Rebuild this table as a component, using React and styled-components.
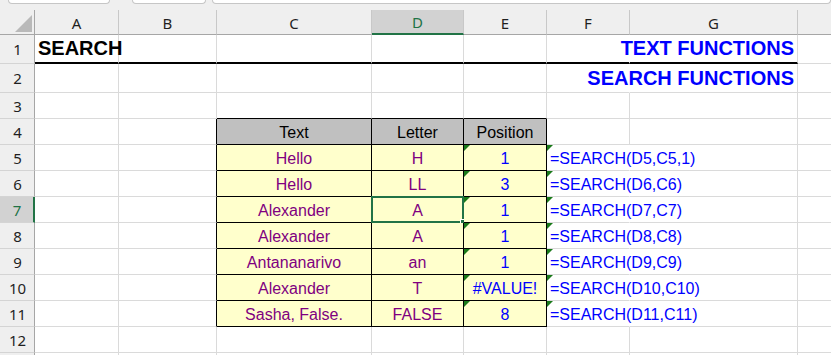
import React from 'react';
import styled, { createGlobalStyle } from 'styled-components';

const GlobalStyle = createGlobalStyle`
    html, body {
        margin: 0;
        padding: 0;
        background: #ffffff;
        overflow: hidden;
    }
`;

const GRID = '#dadada';
const GREEN = '#217346';

const colWidths = [35, 84, 98, 155, 92, 83, 83, 168, 100];
// H runs past the window edge, so its label is not in view
const colNames = ['A', 'B', 'C', 'D', 'E', 'F', 'G', ''];
const rowHeights = [29, 29, 26, 26, 26, 26, 26, 26, 26, 26, 26, 26, 26];

const rows = [
    ['Hello', 'H', '1', '=SEARCH(D5,C5,1)'],
    ['Hello', 'LL', '3', '=SEARCH(D6,C6)'],
    ['Alexander', 'A', '1', '=SEARCH(D7,C7)'],
    ['Alexander', 'A', '1', '=SEARCH(D8,C8)'],
    ['Antananarivo', 'an', '1', '=SEARCH(D9,C9)'],
    ['Alexander', 'T', '#VALUE!', '=SEARCH(D10,C10)'],
    ['Sasha, False.', 'FALSE', '8', '=SEARCH(D11,C11)'],
];

const Window = styled.div`
    width: 831px;
    height: 355px;
    overflow: hidden;
    background: #ffffff;
`;

const TopStrip = styled.div`
    height: 10px;
    background: #efefef;
    display: flex;
    align-items: flex-start;
    overflow: hidden;
`;

const BarBox = styled.div`
    height: 3px;
    background: #ffffff;
    border: 1px solid #c6c6c6;
    border-top: none;
    border-radius: 0 0 4px 4px;
    margin-left: ${p => p.$gap}px;
    width: ${p => (p.$w ? `${p.$w}px` : 'auto')};
    flex: ${p => (p.$w ? '0 0 auto' : '1')};
`;

const Sheet = styled.div`
    display: grid;
    width: ${colWidths.reduce((a, b) => a + b, 0)}px;
    grid-template-columns: ${colWidths.map(w => `${w}px`).join(' ')};
    grid-template-rows: 25px ${rowHeights.map(h => `${h}px`).join(' ')};
`;

const Corner = styled.div`
    box-sizing: border-box;
    background: #efefef;
    border-right: 1px solid #a6a6a6;
    border-bottom: 1px solid #a6a6a6;
    display: flex;
    align-items: flex-end;
    justify-content: flex-end;
    padding: 0 2px 2px 0;
`;

const CornerMark = styled.div`
    width: 0;
    height: 0;
    border-bottom: 17px solid #b9b9b9;
    border-left: 17px solid transparent;
`;

const ColHead = styled.div`
    box-sizing: border-box;
    background: ${p => (p.$active ? '#d2d2d2' : '#efefef')};
    color: ${p => (p.$active ? GREEN : '#1f1f1f')};
    border-right: 1px solid #c8c8c8;
    border-bottom: ${p => (p.$active ? `2px solid ${GREEN}` : '1px solid #a6a6a6')};
    font-family: "Noto Sans", "Open Sans", sans-serif;
    font-size: 15px;
    display: flex;
    align-items: center;
    justify-content: center;
    padding-top: 1px;
`;

const RowHead = styled.div`
    box-sizing: border-box;
    background: ${p => (p.$active ? '#d2d2d2' : '#efefef')};
    color: ${p => (p.$active ? GREEN : '#1f1f1f')};
    border-right: ${p => (p.$active ? `2px solid ${GREEN}` : '1px solid #a6a6a6')};
    border-bottom: 1px solid #d4d4d4;
    font-family: "Noto Sans", "Open Sans", sans-serif;
    font-size: 15px;
    display: flex;
    align-items: center;
    justify-content: center;
    padding-left: 1px;
`;

const Cell = styled.div`
    position: relative;
    box-sizing: border-box;
    min-width: 0;
    background: ${p => p.$bg || 'transparent'};
    border-right: 1px solid ${p => p.$right};
    border-bottom: ${p => p.$bw}px solid ${p => p.$bottom};
    color: ${p => p.$color || '#000000'};
    font-family: "Liberation Sans", Arial, sans-serif;
    font-size: ${p => (p.$bold ? 20 : 16)}px;
    font-weight: ${p => (p.$bold ? 700 : 400)};
    white-space: nowrap;
    display: flex;
    align-items: flex-end;
    justify-content: ${p => p.$justify};
    padding: 0 3px 2px 3px;
`;

const Flag = styled.span`
    position: absolute;
    top: 0;
    left: 0;
    width: 0;
    height: 0;
    border-top: 6px solid #1a7a1a;
    border-right: 6px solid transparent;
`;

const Selection = styled.span`
    position: absolute;
    left: -1px;
    top: -1px;
    right: -1px;
    bottom: -1px;
    border: 2px solid ${GREEN};
    pointer-events: none;
`;

const Handle = styled.span`
    position: absolute;
    right: -4px;
    bottom: -4px;
    width: 6px;
    height: 6px;
    box-sizing: border-box;
    background: ${GREEN};
    border: 1px solid #ffffff;
`;

function cellContent(r, c) {
    if (r === 1 && c === 0) return { text: 'SEARCH', bold: true, justify: 'flex-start' };
    if (r === 1 && c === 6) return { text: 'TEXT FUNCTIONS', bold: true, color: '#0000ff', justify: 'flex-end' };
    if (r === 2 && c === 6) return { text: 'SEARCH FUNCTIONS', bold: true, color: '#0000ff', justify: 'flex-end' };
    if (r === 4 && c >= 2 && c <= 4) {
        return { text: ['Text', 'Letter', 'Position'][c - 2], bg: '#c0c0c0', justify: 'center' };
    }
    if (r >= 5 && r <= 11) {
        const data = rows[r - 5];
        if (c === 2 || c === 3) return { text: data[c - 2], color: '#800080', bg: '#ffffcc', justify: 'center' };
        if (c === 4) return { text: data[2], color: '#0000ff', bg: '#ffffcc', justify: 'center', flag: true };
        if (c === 5) return { text: data[3], color: '#0000ff', justify: 'flex-start', flag: true };
    }
    return { text: '', justify: 'flex-start' };
}

function borders(r, c) {
    const inTableRows = r >= 4 && r <= 11;
    let right = GRID;
    if (inTableRows && c >= 1 && c <= 4) right = '#000000';
    else if (c === 5 && (r === 1 || r === 2 || (r >= 5 && r <= 11))) right = 'transparent';

    let bottom = GRID;
    let bw = 1;
    if (r === 1 && c <= 6) {
        bottom = '#000000';
        bw = 2;
    } else if (r >= 3 && r <= 11 && c >= 2 && c <= 4) {
        bottom = '#000000';
    }
    return { right, bottom, bw };
}

export default function App() {
    const rowNums = rowHeights.map((_, i) => i + 1);
    return (
        <Window>
            <GlobalStyle />
            <TopStrip>
                <BarBox $gap={8} $w={100} />
                <BarBox $gap={22} $w={72} />
                <BarBox $gap={6} />
            </TopStrip>
            <Sheet>
                <Corner>
                    <CornerMark />
                </Corner>
                {colNames.map((name, i) => (
                    <ColHead key={i} $active={name === 'D'}>{name}</ColHead>
                ))}
                {rowNums.map(r => (
                    <React.Fragment key={r}>
                        {/* row 13 is only a sliver at the window edge */}
                        <RowHead $active={r === 7}>{r <= 12 ? r : ''}</RowHead>
                        {colNames.map((name, c) => {
                            const content = cellContent(r, c);
                            const b = borders(r, c);
                            return (
                                <Cell
                                    key={c}
                                    $right={b.right}
                                    $bottom={b.bottom}
                                    $bw={b.bw}
                                    $bg={content.bg}
                                    $color={content.color}
                                    $bold={content.bold}
                                    $justify={content.justify}
                                >
                                    {content.flag && <Flag />}
                                    <span>{content.text}</span>
                                    {r === 7 && c === 3 && (
                                        <Selection>
                                            <Handle />
                                        </Selection>
                                    )}
                                </Cell>
                            );
                        })}
                    </React.Fragment>
                ))}
            </Sheet>
        </Window>
    );
}
